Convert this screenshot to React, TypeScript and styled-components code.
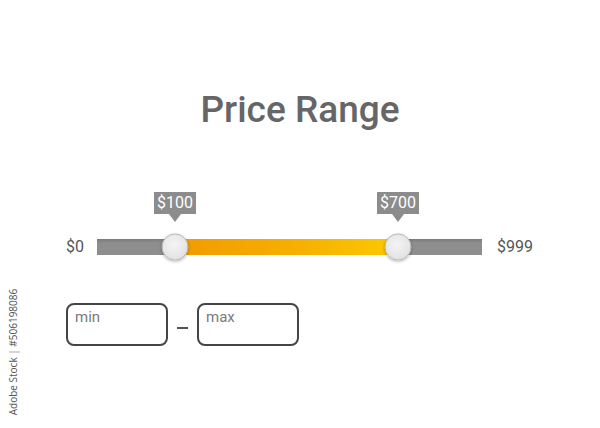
import React from "react";
import styled, { createGlobalStyle } from "styled-components";

const GlobalStyle = createGlobalStyle`
  html, body {
    margin: 0;
    padding: 0;
    background: #ffffff;
  }
  body {
    font-family: Roboto, "Liberation Sans", Arial, sans-serif;
  }
`;

const Page = styled.div`
  position: relative;
  width: 600px;
  height: 428px;
  overflow: hidden;
  background: #ffffff;
  display: flex;
  flex-direction: column;
`;

const Title = styled.h1`
  margin: 88px 0 0;
  text-align: center;
  font-size: 37px;
  line-height: 44px;
  font-weight: 500;
  color: #666666;
`;

const SliderRow = styled.div`
  display: flex;
  align-items: center;
  margin-top: 105px;
  padding-left: 66px;
`;

const EdgeLabel = styled.span<{ $gap: number }>`
  font-size: 16px;
  color: #555555;
  margin: 0 ${({ $gap }) => $gap}px;
  &:first-child {
    margin-left: 0;
  }
`;

const Track = styled.div`
  position: relative;
  width: 385px;
  height: 16px;
  background: linear-gradient(#7a7a7a 0%, #8e8e8e 25%, #8e8e8e 100%);
`;

const Fill = styled.div`
  position: absolute;
  top: 0;
  bottom: 0;
  background: linear-gradient(90deg, #f29a00 0%, #f6b000 55%, #fbc900 100%);
`;

const Thumb = styled.div`
  position: absolute;
  top: 50%;
  width: 27px;
  height: 27px;
  border-radius: 50%;
  transform: translate(-50%, -50%);
  background: radial-gradient(circle at 45% 40%, #f4f4f4 0%, #e6e6e6 60%, #d6d6d6 100%);
  border: 1px solid #b8b8b8;
  box-shadow: 0 1px 3px rgba(0, 0, 0, 0.3);
  box-sizing: border-box;
`;

const Tip = styled.div`
  position: absolute;
  bottom: 41px;
  transform: translateX(-50%);
  padding: 0 3px;
  height: 22px;
  line-height: 22px;
  background: #8c8c8c;
  color: #ffffff;
  font-size: 16px;
  &::after {
    content: "";
    position: absolute;
    left: 50%;
    top: 100%;
    margin-left: -6px;
    border-left: 6px solid transparent;
    border-right: 6px solid transparent;
    border-top: 8px solid #8c8c8c;
  }
`;

const InputRow = styled.div`
  display: flex;
  align-items: center;
  gap: 9px;
  margin-top: 47px;
  padding-left: 66px;
`;

const Box = styled.div`
  width: 102px;
  height: 43px;
  box-sizing: border-box;
  border: 2px solid #454545;
  border-radius: 8px;
  padding: 3px 0 0 7px;
  font-size: 15px;
  color: #7a7a7a;
`;

const Dash = styled.div`
  width: 11px;
  height: 2px;
  margin-top: 6px;
  background: #555555;
`;

const Credit = styled.div`
  position: absolute;
  left: 13px;
  top: 352px;
  transform: translate(-50%, -50%) rotate(-90deg);
  white-space: nowrap;
  font-family: "Open Sans", "Liberation Sans", sans-serif;
  font-size: 10px;
  color: #555555;
`;

const handles = [
  { label: "$100", at: 78 },
  { label: "$700", at: 301 },
];

export default function App() {
  const [a, b] = handles;
  return (
    <>
      <GlobalStyle />
      <Page>
        <Title>Price Range</Title>
        <SliderRow>
          <EdgeLabel $gap={13}>$0</EdgeLabel>
          <Track>
            <Fill style={{ left: a.at, width: b.at - a.at }} />
            {handles.map((h) => (
              <React.Fragment key={h.label}>
                <Tip style={{ left: h.at }}>{h.label}</Tip>
                <Thumb style={{ left: h.at }} />
              </React.Fragment>
            ))}
          </Track>
          <EdgeLabel $gap={15}>$999</EdgeLabel>
        </SliderRow>
        <InputRow>
          <Box>min</Box>
          <Dash />
          <Box>max</Box>
        </InputRow>
        <Credit>Adobe Stock | #506198086</Credit>
      </Page>
    </>
  );
}
